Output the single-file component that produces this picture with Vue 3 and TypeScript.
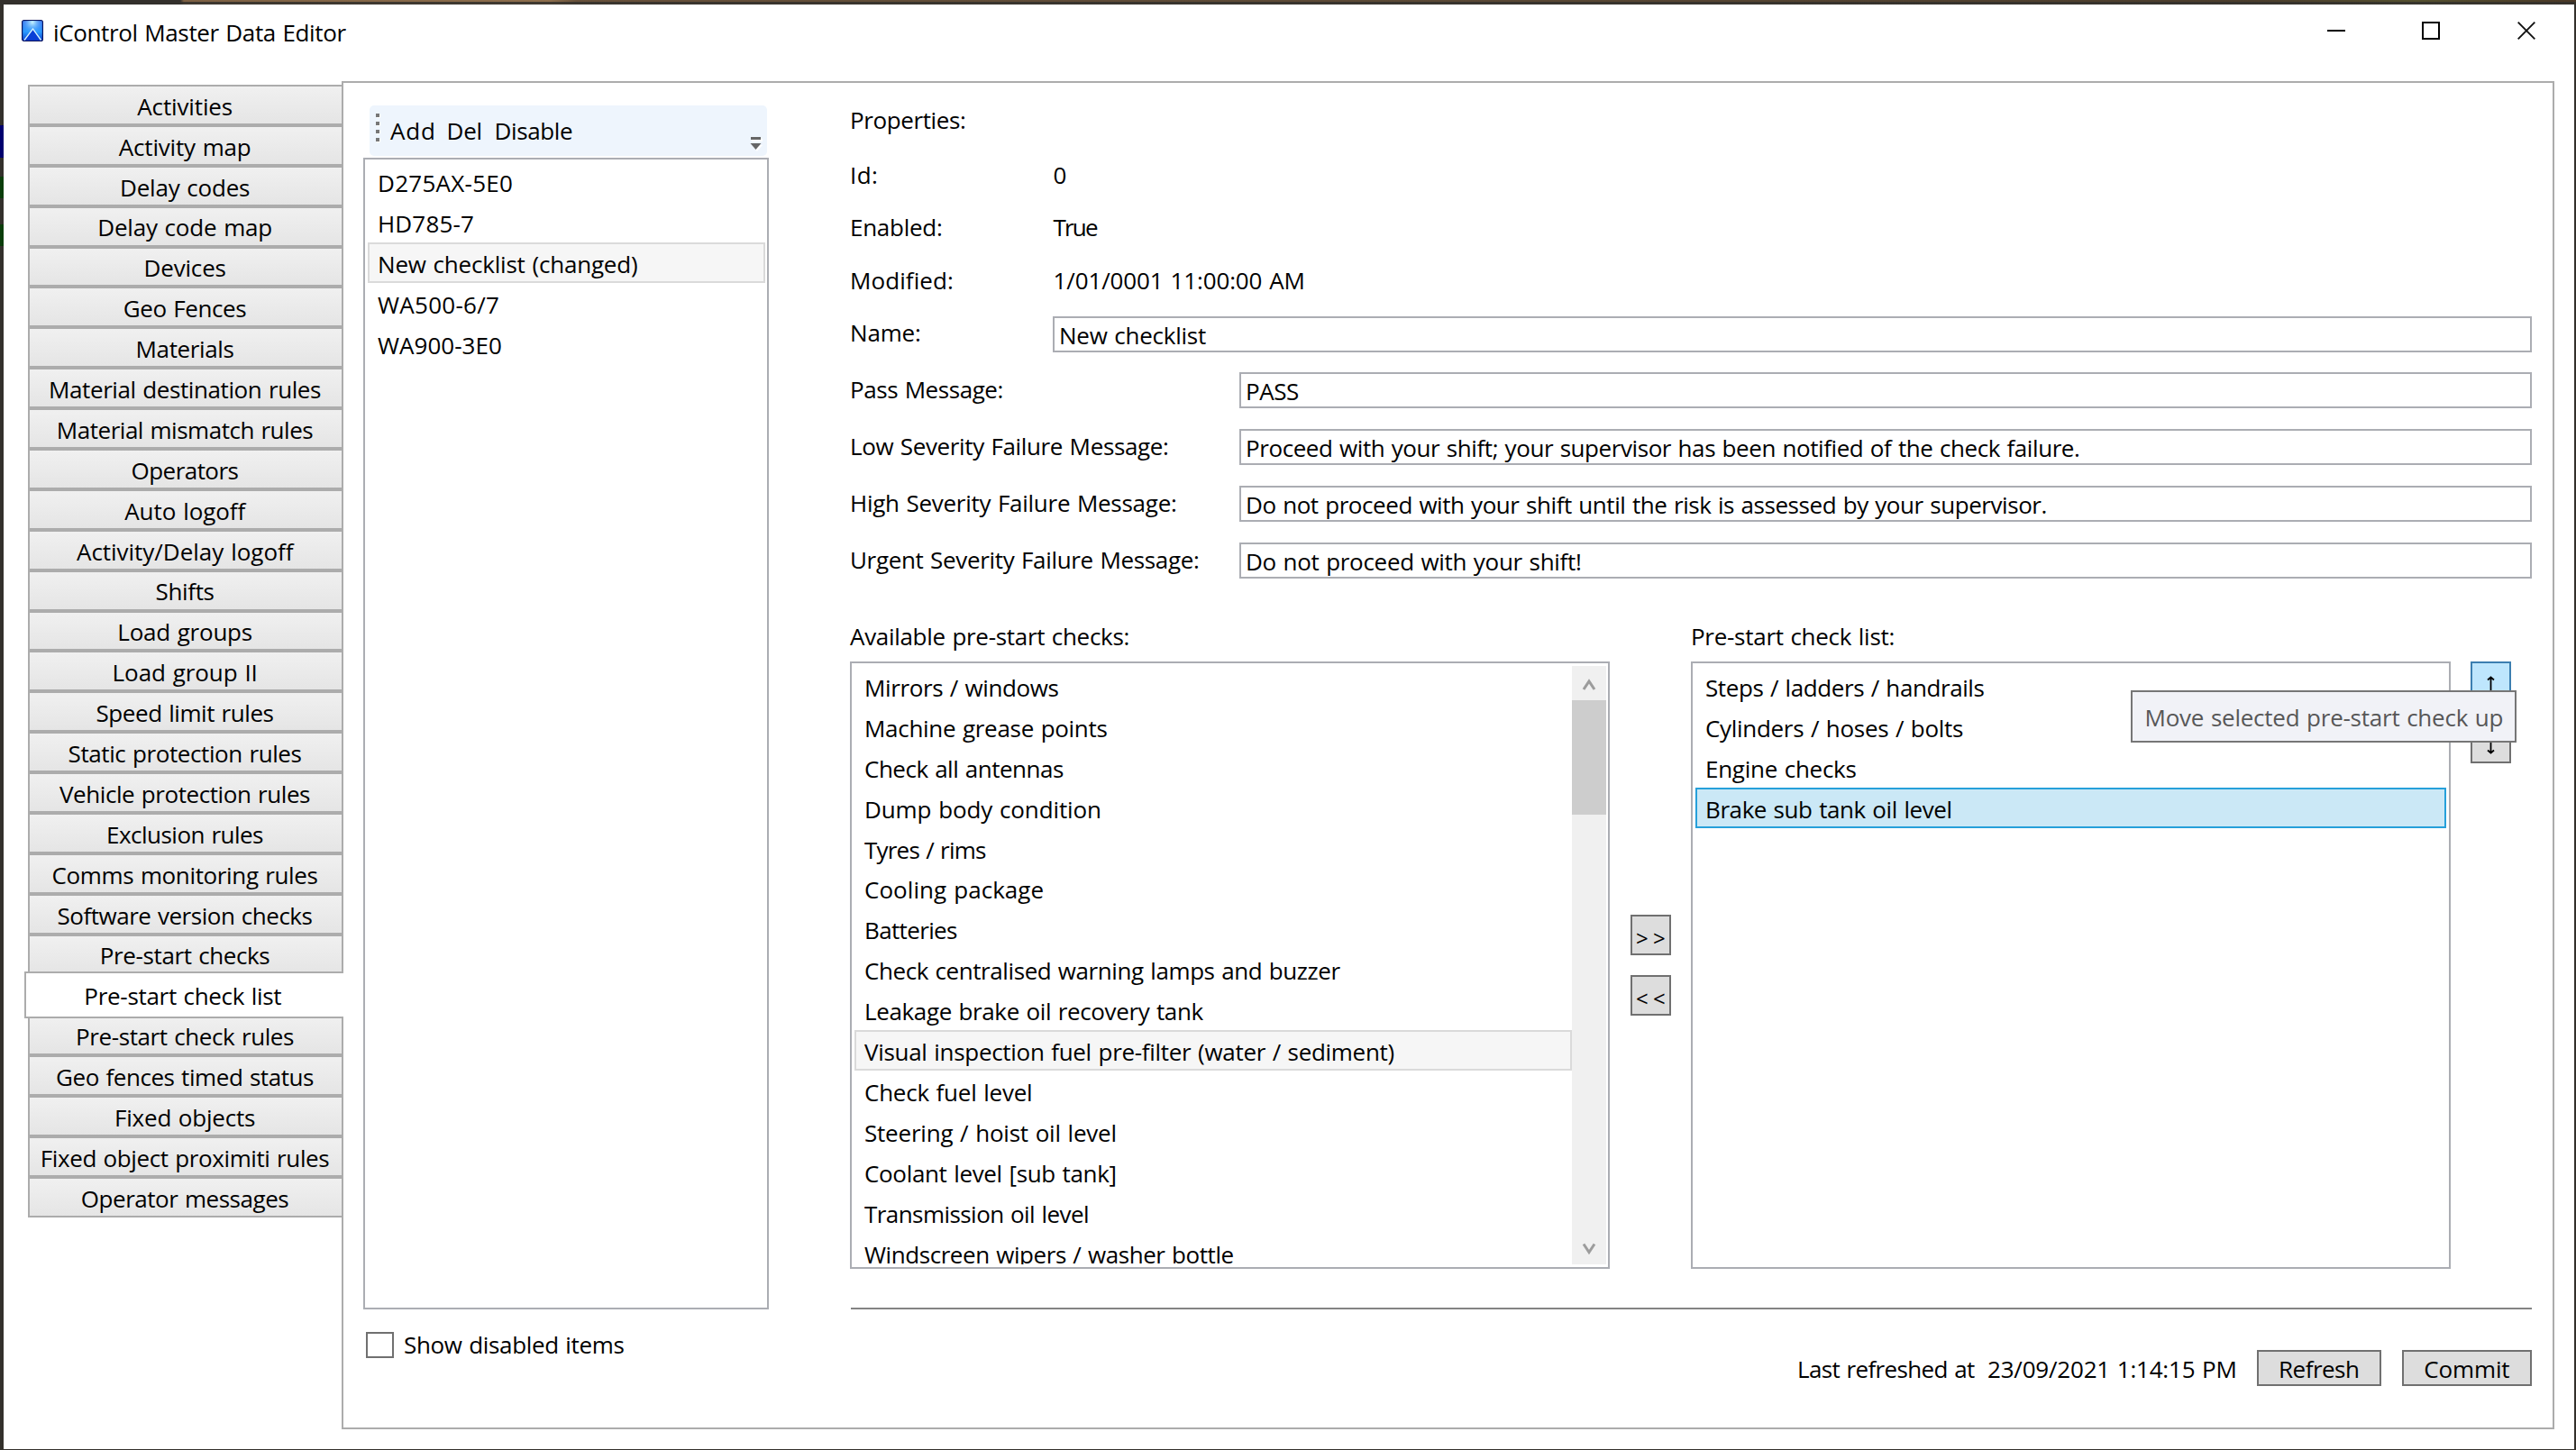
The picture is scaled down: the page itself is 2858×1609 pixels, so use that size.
<script setup lang="ts">
import type { Directive } from 'vue'

type Entry = [label: string, width: number]

const tabs: Entry[] = [
  ['Activities', 105.5], ['Activity map', 146], ['Delay codes', 142], ['Delay code map', 191],
  ['Devices', 89], ['Geo Fences', 135.5], ['Materials', 107], ['Material destination rules', 300],
  ['Material mismatch rules', 282.5], ['Operators', 118], ['Auto logoff', 135.5],
  ['Activity/Delay logoff', 242], ['Shifts', 64], ['Load groups', 147.5], ['Load group II', 157],
  ['Speed limit rules', 196], ['Static protection rules', 258], ['Vehicle protection rules', 278],
  ['Exclusion rules', 172], ['Comms monitoring rules', 294], ['Software version checks', 282],
  ['Pre-start checks', 186.5], ['Pre-start check list', 217], ['Pre-start check rules', 240],
  ['Geo fences timed status', 285], ['Fixed objects', 154], ['Fixed object proximiti rules', 318.5],
  ['Operator messages', 229.5],
]
const activeTab = 22

const checklists: Entry[] = [
  ['D275AX-5E0', 147], ['HD785-7', 104], ['New checklist (changed)', 286],
  ['WA500-6/7', 134], ['WA900-3E0', 137],
]

const facts: { label: Entry; value: Entry }[] = [
  { label: ['Id:', 27], value: ['0', 13] },
  { label: ['Enabled:', 99], value: ['True', 49.5] },
  { label: ['Modified:', 111], value: ['1/01/0001 11:00:00 AM', 275] },
]

const messages: { label: Entry; value: Entry }[] = [
  { label: ['Pass Message:', 166.5], value: ['PASS', 57] },
  { label: ['Low Severity Failure Message:', 350], value: ['Proceed with your shift; your supervisor has been notified of the check failure.', 922] },
  { label: ['High Severity Failure Message:', 359], value: ['Do not proceed with your shift until the risk is assessed by your supervisor.', 885.5] },
  { label: ['Urgent Severity Failure Message:', 384], value: ['Do not proceed with your shift!', 369] },
]

const available: Entry[] = [
  ['Mirrors / windows', 213.5], ['Machine grease points', 267.5], ['Check all antennas', 220],
  ['Dump body condition', 259], ['Tyres / rims', 135], ['Cooling package', 197.5],
  ['Batteries', 101], ['Check centralised warning lamps and buzzer', 527.5],
  ['Leakage brake oil recovery tank', 374.5],
  ['Visual inspection fuel pre-filter (water / sediment)', 587.5], ['Check fuel level', 184],
  ['Steering / hoist oil level', 277.5], ['Coolant level [sub tank]', 277.5],
  ['Transmission oil level', 248], ['Windscreen wipers / washer bottle', 409.5],
]

const chosen: Entry[] = [
  ['Steps / ladders / handrails', 308.5], ['Cylinders / hoses / bolts', 285],
  ['Engine checks', 165.5], ['Brake sub tank oil level', 270.5],
]

const WORD_GAP = 1.2

// Tracks a label so that its glyphs span the given width in pixels.
const ctx = document.createElement('canvas').getContext('2d')!
const vFit: Directive<HTMLElement, number> = {
  mounted(el, { value }) {
    const text = el.textContent ?? ''
    if (text.length < 2) return
    const cs = getComputedStyle(el)
    ctx.font = `${cs.fontWeight} ${cs.fontSize} ${cs.fontFamily}`
    const m = ctx.measureText(text)
    const spaces = text.split(' ').length - 1
    const ink = m.actualBoundingBoxLeft + m.actualBoundingBoxRight + spaces * WORD_GAP
    const gap = (value - ink) / (text.length - 1)
    el.style.wordSpacing = `${WORD_GAP}px`
    el.style.letterSpacing = `${gap.toFixed(3)}px`
    el.style.marginRight = `${(-gap).toFixed(3)}px`
  },
}
</script>

<template>
  <div class="desktop">
    <i class="sliver navy"></i><i class="sliver green g1"></i><i class="sliver green g2"></i>
    <div class="window">
      <header class="titlebar">
        <svg class="logo" width="24" height="24" viewBox="0 0 24 24">
          <defs>
            <linearGradient id="sky" x1="0" y1="0" x2="0" y2="1">
              <stop offset="0" stop-color="#3b6cf0" /><stop offset=".55" stop-color="#2a9bff" /><stop offset="1" stop-color="#0b3fd0" />
            </linearGradient>
            <radialGradient id="glow" cx=".5" cy=".08" r=".6">
              <stop offset="0" stop-color="#c8f6ff" /><stop offset="1" stop-color="#3aa0ff" stop-opacity="0" />
            </radialGradient>
          </defs>
          <rect x=".6" y=".6" width="22.8" height="22.8" rx="2" fill="url(#sky)" stroke="#0a1460" stroke-width="1.2" />
          <rect x="1" y="1" width="22" height="22" fill="url(#glow)" />
          <path d="M3 22.5 L12.5 10.5 L21.5 22.5 Z" fill="#0a3fd6" />
          <path d="M3 22.5 L12.5 10 L21.5 22.5" fill="none" stroke="#d8f4ff" stroke-width="1.3" />
        </svg>
        <span class="title" v-fit="323.5">iControl Master Data Editor</span>
        <div class="winbtns">
          <svg width="20" height="20"><path d="M0 10H20" stroke="#000" stroke-width="2" /></svg>
          <svg width="20" height="20"><rect x="1" y="1" width="18" height="18" fill="none" stroke="#000" stroke-width="2" /></svg>
          <svg width="20" height="20"><path d="M.7 .7 19.3 19.3M19.3 .7 .7 19.3" stroke="#111" stroke-width="1.9" /></svg>
        </div>
      </header>

      <div class="body">
        <nav class="tabs">
          <div v-for="([label, w], i) in tabs" :key="label" class="tab" :class="{ active: i === activeTab }">
            <span v-fit="w">{{ label }}</span>
          </div>
        </nav>

        <main class="panel">
          <section class="side">
            <div class="toolbar">
              <div class="grip"><i v-for="n in 4" :key="n"></i></div>
              <span class="tool add"><span v-fit="48">Add</span></span>
              <span class="tool del"><span v-fit="36">Del</span></span>
              <span class="tool"><span v-fit="84.5">Disable</span></span>
              <svg class="overflow" width="14" height="16"><path d="M2 3.5H14" stroke="#fff" stroke-width="3" /><path d="M1 1.5H12" stroke="#666" stroke-width="3" /><path d="M2 9H14L8 16Z" fill="#fff" /><path d="M.5 7H12.5L6.5 14Z" fill="#666" /></svg>
            </div>
            <div class="listbox lists">
              <div v-for="([label, w], i) in checklists" :key="label" class="row" :class="{ inactive: i === 2 }">
                <span v-fit="w">{{ label }}</span>
              </div>
            </div>
            <label class="check"><i class="box"></i><span v-fit="243.5">Show disabled items</span></label>
          </section>

          <section class="detail">
            <div class="line head"><span v-fit="125">Properties:</span></div>
            <div v-for="f in facts" :key="f.label[0]" class="line">
              <div class="key"><span v-fit="f.label[1]">{{ f.label[0] }}</span></div>
              <div class="val"><span v-fit="f.value[1]">{{ f.value[0] }}</span></div>
            </div>
            <div class="line name">
              <div class="key"><span v-fit="75">Name:</span></div>
              <div class="field"><span v-fit="161">New checklist</span></div>
            </div>
            <div v-for="m in messages" :key="m.label[0]" class="line msg">
              <div class="key wide"><span v-fit="m.label[1]">{{ m.label[0] }}</span></div>
              <div class="field"><span v-fit="m.value[1]">{{ m.value[0] }}</span></div>
            </div>

            <div class="pickers">
              <div class="picker">
                <div class="caption"><span v-fit="308.5">Available pre-start checks:</span></div>
                <div class="listbox big">
                  <div class="rows">
                    <div v-for="([label, w], i) in available" :key="label" class="row" :class="{ inactive: i === 9 }">
                      <span v-fit="w">{{ label }}</span>
                    </div>
                  </div>
                  <div class="scroll">
                    <svg width="38" height="38"><path d="M13 26 19 17 25 26" fill="none" stroke="#9c9c9c" stroke-width="3" /></svg>
                    <div class="thumb"></div>
                    <svg width="38" height="38"><path d="M13 15.5 19 24.5 25 15.5" fill="none" stroke="#9c9c9c" stroke-width="3" /></svg>
                  </div>
                </div>
              </div>
              <div class="movers">
                <button class="btn sq">&gt;&gt;</button>
                <button class="btn sq">&lt;&lt;</button>
              </div>
              <div class="picker">
                <div class="caption"><span v-fit="222.5">Pre-start check list:</span></div>
                <div class="listbox big">
                  <div class="rows">
                    <div v-for="([label, w], i) in chosen" :key="label" class="row" :class="{ selected: i === 3 }">
                      <span v-fit="w">{{ label }}</span>
                    </div>
                  </div>
                </div>
              </div>
              <div class="order">
                <button class="btn sq hot"><svg width="9" height="24"><path d="M4.5 1V24M1 4.5 4.5 1.5 8 4.5" fill="none" stroke="#000" stroke-width="1.8" /></svg></button>
                <button class="btn sq"><svg width="9" height="24"><path d="M4.5 0V23M1 19.5 4.5 22.5 8 19.5" fill="none" stroke="#000" stroke-width="1.8" /></svg></button>
                <div class="tooltip"><span v-fit="395">Move selected pre-start check up</span></div>
              </div>
            </div>

            <div class="rule"></div>
            <footer class="actions">
              <div class="stamp"><span v-fit="195">Last refreshed at</span></div>
              <div class="when"><span v-fit="273.5">23/09/2021 1:14:15 PM</span></div>
              <button class="btn refresh"><span v-fit="86">Refresh</span></button>
              <button class="btn commit"><span v-fit="94">Commit</span></button>
            </footer>
          </section>
        </main>
      </div>
    </div>
  </div>
</template>

<style>
html, body { margin: 0; background: #fff; overflow: hidden; }
</style>

<style scoped>
* { box-sizing: border-box; }
.desktop {
  position: relative;
  width: 2858px; height: 1609px;
  padding: 5px 2px 1px 4px;
  background:
    linear-gradient(rgba(50, 48, 44, 0) 2px, rgba(50, 48, 44, .85) 2px) 0 0 / 100% 5px no-repeat,
    linear-gradient(90deg, #33302c 200px, #7d6043 204px, #8d6e4c 610px, #67503a 640px, #5c4a36 1500px, #4b3d2c 2500px, #54502f 2680px, #4a3826 2858px) 0 0 / 100% 5px no-repeat,
    #33302b;
  font: 26px/36px "Open Sans", "Noto Sans", sans-serif;
  color: #000;
}
.sliver { position: absolute; left: 0; width: 4px; }
.navy { top: 139px; height: 36px; background: #00006e; }
.green { height: 24px; background: #0a3d0a; }
.g1 { top: 196px; }
.g2 { top: 249px; }
span { white-space: pre; display: inline-block; }

.window { display: flex; flex-direction: column; height: 1603px; background: #fff; }
.titlebar { display: flex; height: 85px; padding: 17px 43px 0 20px; }
.logo { display: block; }
.title { margin-left: 11px; height: 36px; margin-top: -4px; }
.winbtns { display: flex; gap: 85px; margin-left: auto; padding-top: 2px; }
.winbtns svg { display: block; }
.winbtns svg:last-child { margin-left: 1px; }

.body { display: flex; padding-left: 23px; }
.tabs { width: 352px; padding: 4px 0 0 4px; }
.tab {
  height: 44.9px;
  display: flex; align-items: center; justify-content: center;
  border: 2px solid #acacac; border-right: 0;
  background: linear-gradient(#f0f0f0, #e5e5e5);
  padding: 2.7px 1.5px 0 0;
}
.tab.active {
  position: relative; z-index: 1;
  height: 52.9px; width: 354px; margin: -4px 0 -4px -4px;
  padding-right: 4px;
  background: #fff;
}

.panel {
  display: flex; gap: 90px;
  width: 2455px; height: 1496px;
  border: 2px solid #acacac;
  padding-left: 22px;
}
.side { width: 450px; padding-top: 25px; }
.toolbar {
  display: flex; position: relative;
  width: 441px; height: 56px; margin: 0 0 2px 7px;
  padding: 10px 0 0 7px;
  background: #eef5fd; border-radius: 5px;
}
.grip { display: flex; flex-direction: column; gap: 5px; width: 14px; }
.grip i { width: 4px; height: 4px; background: #777; box-shadow: 1px 1px 0 #fff; }
.grip i:first-child { margin-top: -1px; }
.tool { height: 36px; padding-left: 2px; }
.tool.add { width: 62.5px; }
.tool.del { width: 53px; }
.overflow { position: absolute; right: 5px; bottom: 5px; }

.listbox { border: 2px solid #abadb3; background: #fff; }
.lists { height: 1278px; padding: 2px 2px 0 3px; }
.row {
  height: 44.92px; padding: 3px 0 0 9px;
  display: flex; align-items: center;
  border: 2px solid transparent;
}
.row.inactive { background: #f6f6f6; border-color: #dadada; }
.row.selected { background: #cbe8f6; border-color: #26a0da; }
.check { display: flex; margin: 25px 0 0 3px; align-items: center; height: 28px; }
.box { width: 31px; height: 29px; border: 2px solid #707070; margin-right: 11px; }

.detail { width: 1866px; padding-top: 11px; }
.line { display: flex; align-items: center; height: 58.5px; }
.line.head { height: 59px; margin-bottom: 2.5px; }
.key { width: 225px; height: 36px; }
.key.wide { width: 432px; }
.val { padding-left: 0.5px; }
.line.name { height: 61.5px; }
.line.msg { height: 63px; }
.name .key { margin-top: -3px; }
.msg .key { margin-top: -2px; }
.field {
  flex: 1; height: 40px; padding: 1px 0 0 5px;
  border: 2px solid #abadb3; line-height: 36px;
}
.field span { height: 36px; }
.pickers { display: flex; margin-top: 24.5px; }
.caption { height: 56px; padding-top: 10px; }
.picker { width: 843px; }
.big { display: flex; height: 674px; padding: 3px 2px 3px 3px; }
.rows { flex: 1; overflow: hidden; }
.big .row.selected { margin-right: 1px; }
.scroll { width: 38px; display: flex; flex-direction: column; background: #f0f0f0; }
.scroll svg { display: block; }
.thumb { height: 127px; background: #cdcdcd; margin-bottom: auto; }
.movers { display: flex; flex-direction: column; gap: 22px; width: 90px; padding: 337px 0 0 23px; }
.btn {
  display: flex; align-items: center; justify-content: center;
  margin: 0; padding: 0; border: 2px solid #707070; background: #ddd;
  font: inherit; color: #000;
}
.btn.sq { width: 45px; height: 45px; }
.movers .btn { font-size: 24px; letter-spacing: 5.3px; padding: 6px 0 0 5px; }
.order { position: relative; display: flex; flex-direction: column; gap: 23px; padding: 56px 0 0 22px; }
.btn.hot { background: #bee6fd; border-color: #3c7fb1; padding-top: 11px; }
.tooltip {
  position: absolute; right: -6px; top: 88px;
  width: 428px; height: 58px; padding: 10px 0 0 13.5px;
  border: 2px solid #767676; background: #f1f2f7; color: #575757;
}
.rule { height: 2px; margin: 43px 0 0 1px; background: #838383; }
.actions { display: flex; justify-content: flex-end; margin-top: 45px; }
.actions .btn { height: 40px; }
.stamp { width: 211px; padding-top: 3px; }
.when { width: 299px; padding-top: 3px; }
.refresh { width: 138px; margin-right: 23px; }
.commit { width: 144px; }
.actions .btn span { padding-top: 2px; }
</style>
